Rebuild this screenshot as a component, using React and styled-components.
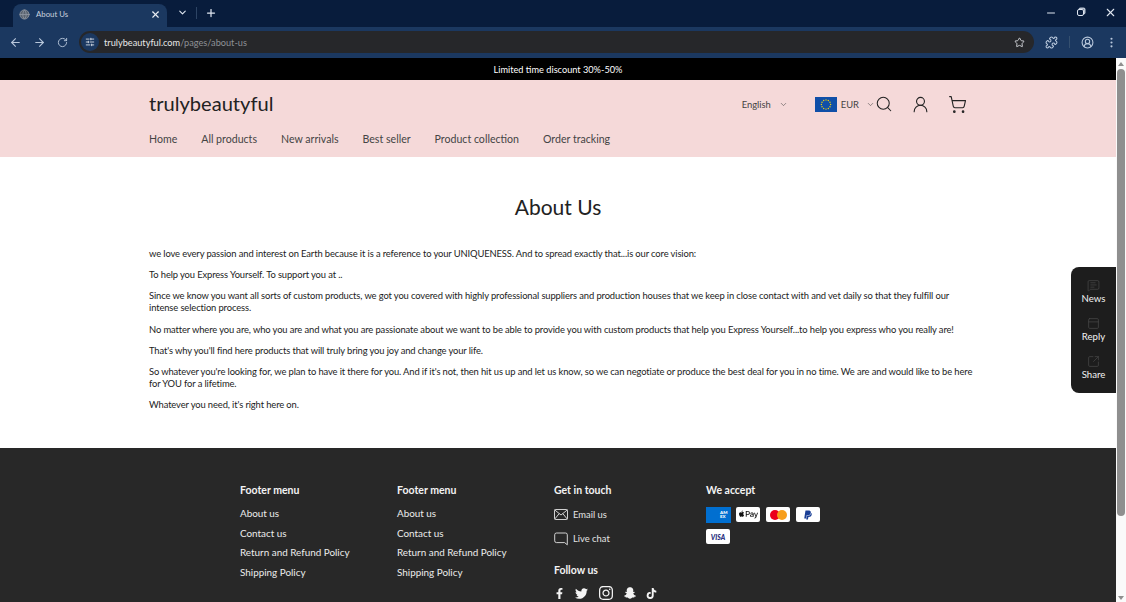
import React from 'react';
import styled, { createGlobalStyle } from 'styled-components';
import {
  ArrowLeft,
  ArrowRight,
  RotateCw,
  Star,
  Puzzle,
  CircleUserRound,
  EllipsisVertical,
  ChevronDown,
  Plus,
  X,
  Minus,
  Search,
  UserRound,
  ShoppingCart,
  Globe,
  SlidersHorizontal,
  MessageSquareText,
  PanelTop,
  SquareArrowOutUpRight,
} from 'lucide-react';
import { FaFacebookF, FaTwitter, FaInstagram, FaSnapchatGhost, FaTiktok, FaApplePay, FaPaypal } from 'react-icons/fa';

const GlobalStyle = createGlobalStyle`
  html, body {
    margin: 0;
    padding: 0;
    height: 100%;
    overflow: hidden;
    font-family: Lato, "Liberation Sans", sans-serif;
  }
`;

const Browser = styled.div`
  width: 1126px;
  height: 602px;
  display: flex;
  flex-direction: column;
  overflow: hidden;
`;

const TabStrip = styled.div`
  height: 27px;
  background: #081c3c;
  display: flex;
  align-items: flex-end;
  padding-left: 13px;
  color: #dfe6f0;
`;

const Tab = styled.div`
  width: 154px;
  height: 23px;
  background: #1b3860;
  border-radius: 8px 8px 0 0;
  display: flex;
  align-items: center;
  padding: 0 6px 3px 6px;
  box-sizing: border-box;
  font-size: 7.8px;
  gap: 6px;
  color: #c9d2df;
`;

const TabTitle = styled.span`
  flex: 1;
`;

const StripButtons = styled.div`
  display: flex;
  align-items: center;
  height: 27px;
  padding-bottom: 2px;
  box-sizing: border-box;
  margin-left: 10px;
  gap: 8px;
`;

const StripDivider = styled.div`
  width: 1px;
  height: 12px;
  background: #2d4464;
`;

const WindowControls = styled.div`
  margin-left: auto;
  height: 27px;
  padding-bottom: 2px;
  box-sizing: border-box;
  display: flex;
  align-items: center;
  gap: 19px;
  padding-right: 9px;
`;

const RestoreIcon = styled.div`
  width: 5px;
  height: 5px;
  border: 1.5px solid #dfe6f0;
  border-radius: 2px;
  margin: 0 1px;
  box-shadow: 1.5px -1.5px 0 0 #b9c3d2;
`;

const Toolbar = styled.div`
  height: 31px;
  background: #1b3860;
  display: flex;
  align-items: center;
  padding: 0 8px 1px 9px;
  box-sizing: border-box;
  color: #b8c7db;
`;

const NavButtons = styled.div`
  display: flex;
  align-items: center;
  gap: 11px;
  margin-right: 11px;
`;

const Omnibox = styled.div`
  width: 955px;
  height: 22px;
  border-radius: 11px;
  background: #26272a;
  display: flex;
  align-items: center;
  padding: 0 9px 0 2px;
  box-sizing: border-box;
  font-size: 9.2px;
`;

const SiteBadge = styled.div`
  width: 18px;
  height: 18px;
  border-radius: 50%;
  background: #1b3860;
  display: flex;
  align-items: center;
  justify-content: center;
  color: #e4e9f1;
  margin-right: 5px;
`;

const Domain = styled.span`
  color: #e8e8e8;
`;

const UrlPath = styled.span`
  color: #8e9196;
`;

const StarWrap = styled.div`
  margin-left: auto;
  display: flex;
  color: #d5d8dc;
`;

const ToolbarActions = styled.div`
  display: flex;
  align-items: center;
  margin-left: 11px;
  gap: 11px;
`;

const ToolDivider = styled.div`
  width: 1px;
  height: 12px;
  background: #35506f;
`;

const Viewport = styled.div`
  flex: 1;
  min-height: 0;
  display: flex;
  position: relative;
`;

const Page = styled.div`
  width: 1116px;
  overflow: hidden;
  background: #fff;
  color: #222;
`;

const Scrollbar = styled.div`
  width: 10px;
  background: #fafafa;
  display: flex;
  flex-direction: column;
  align-items: center;
  padding: 4px 0 2px;
  box-sizing: border-box;
`;

const ScrollArrow = styled.div`
  width: 0;
  height: 0;
  border-left: 3.5px solid transparent;
  border-right: 3.5px solid transparent;
  border-bottom: ${(p) => (p.$down ? 0 : 4)}px solid #8f8f8f;
  border-top: ${(p) => (p.$down ? 4 : 0)}px solid #8f8f8f;
  margin-top: ${(p) => (p.$down ? 'auto' : 0)};
`;

const ScrollThumb = styled.div`
  width: 8px;
  height: 447px;
  margin-top: 3px;
  background: #8f8f8f;
  border-radius: 4px;
`;

const Announcement = styled.div`
  height: 22px;
  background: #000;
  color: #fff;
  font-size: 9.2px;
  display: flex;
  align-items: center;
  justify-content: center;
`;

const Header = styled.header`
  height: 77px;
  background: #f5d9d9;
  padding: 0 149px;
  display: flex;
  flex-direction: column;
`;

const HeaderTop = styled.div`
  display: flex;
  align-items: center;
  height: 48px;
`;

const Logo = styled.div`
  font-size: 20.1px;
  color: #222;
  padding-bottom: 2px;
`;

const HeaderTools = styled.div`
  margin-left: auto;
  display: flex;
  align-items: center;
  color: #222;
`;

const Selector = styled.div`
  display: flex;
  align-items: center;
  font-size: 9.4px;
  color: #444;
  gap: ${(p) => p.$gap}px;
  margin-right: ${(p) => p.$after}px;
`;

const Flag = styled.svg`
  display: block;
`;

const IconSpace = styled.div`
  display: flex;
  margin-left: ${(p) => p.$left}px;
`;

const Nav = styled.nav`
  display: flex;
  gap: 24px;
  font-size: 10.6px;
  color: #444;
  padding-top: 5px;
`;

const Main = styled.main`
  height: 291px;
  padding: 0 149px;
  box-sizing: border-box;
`;

const Title = styled.h1`
  margin: 0;
  padding-top: 35px;
  margin-bottom: 27px;
  font-size: 21px;
  line-height: 29px;
  font-weight: 400;
  text-align: center;
  color: #222;
`;

const Para = styled.p`
  margin: 0 0 9.2px;
  font-size: 9.4px;
  letter-spacing: -0.115px;
  line-height: 12px;
  width: 826px;
  color: #1c1c1c;
`;

const Footer = styled.footer`
  height: 154px;
  background: #282828;
  color: #f0f0f0;
  padding: 35px 0 0 240px;
  box-sizing: border-box;
  display: grid;
  grid-template-columns: 157px 157px 152px 130px;
  overflow: hidden;
`;

const FooterColumn = styled.div`
  display: flex;
  flex-direction: column;
`;

const FooterHeading = styled.div`
  font-size: 10.5px;
  font-weight: 700;
  line-height: 14px;
  margin-top: ${(p) => p.$top || 0}px;
  margin-bottom: ${(p) => p.$gap || 7}px;
  color: #f3f3f3;
`;

const FooterLink = styled.div`
  font-size: 9.9px;
  line-height: 19.5px;
  color: #ececec;
`;

const ContactRow = styled.div`
  display: flex;
  align-items: center;
  gap: 5px;
  font-size: 9.4px;
  height: 14px;
  margin-bottom: 10.5px;
  color: #e4e4e4;
`;

const Socials = styled.div`
  display: flex;
  align-items: center;
  gap: 10px;
  margin-top: -1px;
  color: #f4f4f4;
`;

const Cards = styled.div`
  display: flex;
  flex-wrap: wrap;
  gap: 6px;
  width: 120px;
`;

const Card = styled.div`
  width: 24px;
  height: 15px;
  border-radius: 2px;
  background: #fff;
  display: flex;
  align-items: center;
  justify-content: center;
  overflow: hidden;
`;

const AmexCard = styled(Card)`
  width: 25px;
  height: 16px;
  margin-right: -1px;
  border-radius: 0;
  background: #016fd0;
`;

const AmexText = styled.span`
  font-size: 4.5px;
  line-height: 4.5px;
  font-weight: 900;
  color: #fff;
  width: 11px;
  margin-left: auto;
`;

const MasterDot = styled.div`
  width: 10px;
  height: 10px;
  border-radius: 50%;
  background: ${(p) => p.$color};
  margin-left: ${(p) => p.$overlap || 0}px;
`;

const VisaText = styled.span`
  font-size: 6.8px;
  font-weight: 900;
  font-style: italic;
  color: #23297a;
`;

const SideWidget = styled.aside`
  position: absolute;
  right: 10px;
  top: 209px;
  width: 45px;
  height: 126px;
  background: #1d1d1d;
  border-radius: 8px 0 0 8px;
  display: flex;
  flex-direction: column;
  align-items: center;
  padding-top: 12px;
  box-sizing: border-box;
`;

const WidgetItem = styled.div`
  display: flex;
  flex-direction: column;
  align-items: center;
  height: 38.7px;
  font-size: 9.6px;
  line-height: 12px;
  gap: 1px;
  color: #4a4a4a;
`;

const WidgetLabel = styled.span`
  color: #f3f3f3;
`;

const navItems = ['Home', 'All products', 'New arrivals', 'Best seller', 'Product collection', 'Order tracking'];
const footerLinks = ['About us', 'Contact us', 'Return and Refund Policy', 'Shipping Policy'];

const paragraphs = [
  'we love every passion and interest on Earth because it is a reference to your UNIQUENESS. And to spread exactly that...is our core vision:',
  'To help you Express Yourself. To support you at ..',
  'Since we know you want all sorts of custom products, we got you covered with highly professional suppliers and production houses that we keep in close contact with and vet daily so that they fulfill our intense selection process.',
  "No matter where you are, who you are and what you are passionate about we want to be able to provide you with custom products that help you Express Yourself...to help you express who you really are!",
  "That's why you'll find here products that will truly bring you joy and change your life.",
  "So whatever you're looking for, we plan to have it there for you. And if it's not, then hit us up and let us know, so we can negotiate or produce the best deal for you in no time. We are and would like to be here for YOU for a lifetime.",
  "Whatever you need, it's right here on.",
];

const euStars = Array.from({ length: 12 }, (_, i) => {
  const a = (i * Math.PI) / 6;
  return { x: 11 + Math.cos(a) * 4.6, y: 7.5 + Math.sin(a) * 4.6 };
});

function EnvelopeIcon() {
  return (
    <svg width="14" height="11" viewBox="0 0 14 11" fill="none" stroke="currentColor" strokeWidth="0.9">
      <rect x="0.5" y="0.5" width="13" height="10" rx="0.8" />
      <path d="M0.8 1 L7 6 L13.2 1 M0.8 10 L5.2 4.6 M13.2 10 L8.8 4.6" />
    </svg>
  );
}

function ChatIcon() {
  return (
    <svg width="14" height="14" viewBox="0 0 14 14" fill="none" stroke="currentColor" strokeWidth="0.9">
      <path d="M2.5 1 H11.5 A1.8 1.8 0 0 1 13.3 2.8 V12.8 L10.6 10.6 H2.5 A1.8 1.8 0 0 1 0.7 8.8 V2.8 A1.8 1.8 0 0 1 2.5 1 Z" />
    </svg>
  );
}

function FooterMenu() {
  return (
    <FooterColumn>
      <FooterHeading>Footer menu</FooterHeading>
      {footerLinks.map((link) => (
        <FooterLink key={link}>{link}</FooterLink>
      ))}
    </FooterColumn>
  );
}

export default function App() {
  return (
    <Browser>
      <GlobalStyle />
      <TabStrip>
        <Tab>
          <Globe size={11} color="#8a929e" fill="#59636f" />
          <TabTitle>About Us</TabTitle>
          <X size={11} color="#e8edf3" strokeWidth={2.5} />
        </Tab>
        <StripButtons>
          <ChevronDown size={11} strokeWidth={2.5} />
          <StripDivider />
          <Plus size={12} strokeWidth={2.5} />
        </StripButtons>
        <WindowControls>
          <Minus size={12} />
          <RestoreIcon />
          <X size={13} />
        </WindowControls>
      </TabStrip>

      <Toolbar>
        <NavButtons>
          <ArrowLeft size={13} />
          <ArrowRight size={13} />
          <RotateCw size={11} />
        </NavButtons>
        <Omnibox>
          <SiteBadge>
            <SlidersHorizontal size={10} />
          </SiteBadge>
          <Domain>trulybeautyful.com</Domain>
          <UrlPath>/pages/about-us</UrlPath>
          <StarWrap>
            <Star size={11} strokeWidth={2} />
          </StarWrap>
        </Omnibox>
        <ToolbarActions>
          <Puzzle size={13} />
          <ToolDivider />
          <CircleUserRound size={13} />
          <EllipsisVertical size={13} />
        </ToolbarActions>
      </Toolbar>

      <Viewport>
        <Page>
          <Announcement>Limited time discount 30%-50%</Announcement>
          <Header>
            <HeaderTop>
              <Logo>trulybeautyful</Logo>
              <HeaderTools>
                <Selector $gap={8} $after={27}>
                  English
                  <ChevronDown size={9} strokeWidth={1.5} />
                </Selector>
                <Selector $gap={4} $after={0}>
                  <Flag width="22" height="15" viewBox="0 0 22 15">
                    <rect width="22" height="15" fill="#0f4fa8" />
                    {euStars.map((s, i) => (
                      <circle key={i} cx={s.x} cy={s.y} r="0.7" fill="#f4d20c" />
                    ))}
                  </Flag>
                  EUR
                  <IconSpace $left={3}>
                    <ChevronDown size={9} strokeWidth={1.5} />
                  </IconSpace>
                </Selector>
                <Search size={18} strokeWidth={1.4} />
                <IconSpace $left={18}>
                  <UserRound size={19} strokeWidth={1.4} />
                </IconSpace>
                <IconSpace $left={18}>
                  <ShoppingCart size={19} strokeWidth={1.4} />
                </IconSpace>
              </HeaderTools>
            </HeaderTop>
            <Nav>
              {navItems.map((item) => (
                <span key={item}>{item}</span>
              ))}
            </Nav>
          </Header>

          <Main>
            <Title>About Us</Title>
            {paragraphs.map((text) => (
              <Para key={text}>{text}</Para>
            ))}
          </Main>

          <Footer>
            <FooterMenu />
            <FooterMenu />
            <FooterColumn>
              <FooterHeading $gap={10}>Get in touch</FooterHeading>
              <ContactRow>
                <EnvelopeIcon />
                Email us
              </ContactRow>
              <ContactRow>
                <ChatIcon />
                Live chat
              </ContactRow>
              <FooterHeading $top={7} $gap={9}>Follow us</FooterHeading>
              <Socials>
                <FaFacebookF size={11} />
                <FaTwitter size={13} />
                <FaInstagram size={16} />
                <FaSnapchatGhost size={12} />
                <FaTiktok size={11} />
              </Socials>
            </FooterColumn>
            <FooterColumn>
              <FooterHeading $gap={10}>We accept</FooterHeading>
              <Cards>
                <AmexCard>
                  <AmexText>AM EX</AmexText>
                </AmexCard>
                <Card>
                  <FaApplePay size={19} color="#111" />
                </Card>
                <Card>
                  <MasterDot $color="#eb001b" />
                  <MasterDot $color="#f79e1b" $overlap={-3} />
                </Card>
                <Card>
                  <FaPaypal size={10} color="#1a3f96" />
                </Card>
                <Card>
                  <VisaText>VISA</VisaText>
                </Card>
              </Cards>
            </FooterColumn>
          </Footer>
        </Page>
        <Scrollbar>
          <ScrollArrow />
          <ScrollThumb />
          <ScrollArrow $down />
        </Scrollbar>
        <SideWidget>
          <WidgetItem>
            <MessageSquareText size={13} strokeWidth={1.3} />
            <WidgetLabel>News</WidgetLabel>
          </WidgetItem>
          <WidgetItem>
            <PanelTop size={13} strokeWidth={1.3} />
            <WidgetLabel>Reply</WidgetLabel>
          </WidgetItem>
          <WidgetItem>
            <SquareArrowOutUpRight size={13} strokeWidth={1.3} />
            <WidgetLabel>Share</WidgetLabel>
          </WidgetItem>
        </SideWidget>
      </Viewport>
    </Browser>
  );
}
